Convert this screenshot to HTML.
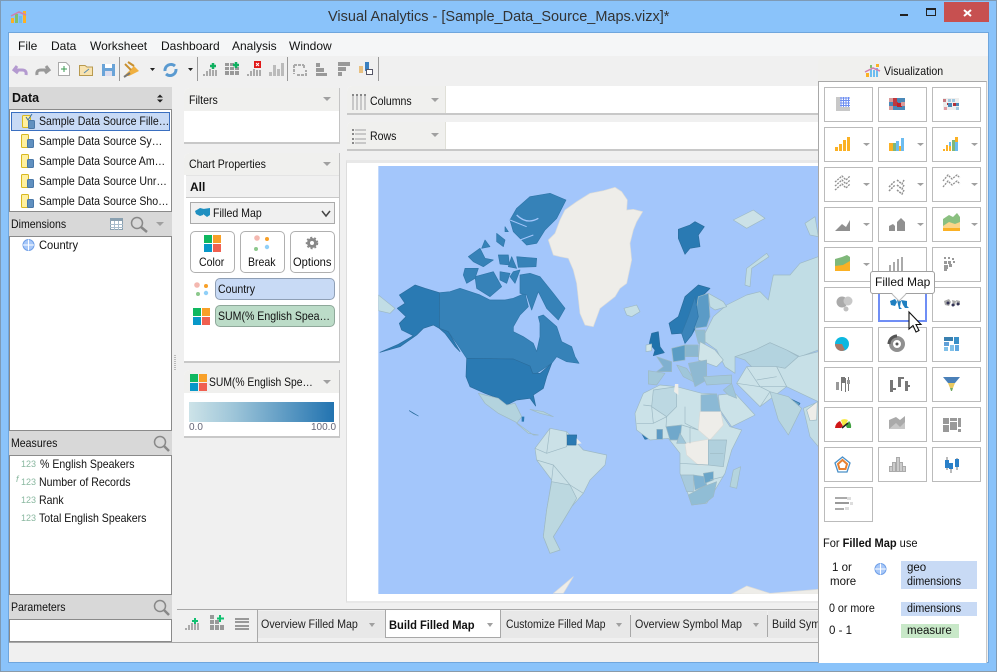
<!DOCTYPE html>
<html><head><meta charset="utf-8"><title>Visual Analytics</title>
<style>
*{box-sizing:border-box}
html,body{margin:0;padding:0;width:997px;height:672px;overflow:hidden;background:#8ac3fa;font-family:"Liberation Sans",sans-serif;font-size:12px;color:#111}
.a{position:absolute}
.t{position:absolute;white-space:nowrap;line-height:16px;height:16px}
.s{transform:scaleX(.88);transform-origin:0 0}
.s9{transform:scaleX(.93);transform-origin:0 0}
.hd{position:absolute;background:#d8d8d8}
.lb{position:absolute;background:#fff;border:1px solid #8a8a8a}
.pn{position:absolute;background:#fff;border-right:1px solid #c4c4c4;border-bottom:2px solid #c8c8c8;border-radius:6px 0 0 0}
.ph{position:absolute;background:#f0f0ee}
.vb{position:absolute;width:49px;height:35px;background:#fff;border:1px solid #bbb}
.btn{position:absolute;top:231px;height:42px;width:45px;background:#fff;border:1px solid #b0b0b0;border-radius:5px}
.tab{position:absolute;top:611px;height:27px;background:#e8e8e8}
</style></head><body>
<div class="a" style="left:0;top:0;width:997px;height:672px;border:1px solid #7e9ab5;border-bottom-color:#8a9aa8"></div>
<div class="a" style="left:944px;top:2px;width:45px;height:20px;background:#c75050"></div>
<div class="t" style="left:328px;top:8px;font-size:14.5px;color:#333;line-height:18px;height:18px">Visual Analytics - [Sample_Data_Source_Maps.vizx]*</div>
<div class="a" style="left:8px;top:32px;width:981px;height:631px;background:#f0f0f0;border:1px solid #6fa6dd"></div>
<div class="a" style="left:9px;top:33px;width:979px;height:23px;background:#f5f6f7"></div>
<div class="t" style="left:18px;top:38px">File</div>
<div class="t" style="left:51px;top:38px">Data</div>
<div class="t" style="left:90px;top:38px">Worksheet</div>
<div class="t" style="left:161px;top:38px">Dashboard</div>
<div class="t" style="left:232px;top:38px">Analysis</div>
<div class="t" style="left:289px;top:38px">Window</div>

<!-- left column -->
<div class="hd" style="left:9px;top:87px;width:163px;height:23px"></div>
<div class="t" style="left:12px;top:90px;font-weight:bold;font-size:12.5px">Data</div>
<div class="lb" style="left:9px;top:109px;width:163px;height:103px"></div>
<div class="a" style="left:11px;top:112px;width:159px;height:19px;background:#c8daf5;border:1px solid #3a6fc0"></div>
<div class="t s" style="left:39px;top:113px">Sample Data Source Fille…</div>
<div class="t s" style="left:39px;top:133px">Sample Data Source Sy…</div>
<div class="t s" style="left:39px;top:153px">Sample Data Source Am…</div>
<div class="t s" style="left:39px;top:173px">Sample Data Source Unr…</div>
<div class="t s" style="left:39px;top:193px">Sample Data Source Sho…</div>
<div class="hd" style="left:9px;top:212px;width:163px;height:24px"></div>
<div class="t s" style="left:11px;top:216px">Dimensions</div>
<div class="lb" style="left:9px;top:236px;width:163px;height:195px"></div>
<div class="t s9" style="left:39px;top:237px">Country</div>
<div class="hd" style="left:9px;top:431px;width:163px;height:24px"></div>
<div class="t s" style="left:11px;top:435px">Measures</div>
<div class="lb" style="left:9px;top:455px;width:163px;height:140px"></div>
<div class="t s" style="left:40px;top:456px">% English Speakers</div>
<div class="t s" style="left:39px;top:474px">Number of Records</div>
<div class="t s" style="left:39px;top:492px">Rank</div>
<div class="t s" style="left:39px;top:510px">Total English Speakers</div>
<div class="t" style="left:21px;top:456px;font-size:9px;color:#8ab8a0">123</div>
<div class="t" style="left:21px;top:474px;font-size:9px;color:#8ab8a0">123</div>
<div class="t" style="left:21px;top:492px;font-size:9px;color:#8ab8a0">123</div>
<div class="t" style="left:21px;top:510px;font-size:9px;color:#8ab8a0">123</div>
<div class="t" style="left:16px;top:471px;font-size:9px;color:#8ab8a0;font-style:italic">f</div>
<div class="hd" style="left:9px;top:595px;width:163px;height:24px"></div>
<div class="t s" style="left:11px;top:599px">Parameters</div>
<div class="lb" style="left:9px;top:619px;width:163px;height:23px"></div>

<!-- middle panels -->
<div class="pn" style="left:184px;top:88px;width:156px;height:56px"></div>
<div class="ph" style="left:184px;top:88px;width:155px;height:23px;border-radius:6px 0 0 0"></div>
<div class="t s" style="left:189px;top:92px">Filters</div>
<div class="pn" style="left:184px;top:153px;width:156px;height:210px"></div>
<div class="ph" style="left:184px;top:153px;width:155px;height:22px;border-radius:6px 0 0 0"></div>
<div class="t s" style="left:189px;top:156px">Chart Properties</div>
<div class="a" style="left:186px;top:175px;width:153px;height:23px;background:#f0f0f0;border-bottom:1px solid #c8c8c8;border-top:1px solid #e4e4e4"></div>
<div class="t" style="left:190px;top:179px;font-weight:bold">All</div>
<div class="a" style="left:190px;top:202px;width:145px;height:22px;background:#f0f0f0;border:1px solid #aaa"></div>
<div class="t s" style="left:213px;top:205px">Filled Map</div>
<div class="btn" style="left:190px"></div><div class="btn" style="left:240px"></div><div class="btn" style="left:290px"></div>
<div class="t s" style="left:199px;top:254px">Color</div>
<div class="t s" style="left:248px;top:254px">Break</div>
<div class="t s9" style="left:293px;top:254px">Options</div>
<div class="a" style="left:215px;top:278px;width:120px;height:22px;background:#c8daf5;border:1px solid #8f9fb5;border-radius:5px"></div>
<div class="t s" style="left:218px;top:281px">Country</div>
<div class="a" style="left:215px;top:305px;width:120px;height:22px;background:#bcdcc8;border:1px solid #8fa89a;border-radius:5px"></div>
<div class="t s" style="left:218px;top:308px">SUM(% English Spea…</div>
<div class="pn" style="left:184px;top:370px;width:156px;height:68px"></div>
<div class="ph" style="left:184px;top:370px;width:155px;height:23px;border-radius:6px 0 0 0"></div>
<div class="t" style="left:209px;top:374px;transform:scaleX(.86);transform-origin:0 0">SUM(% English Spe…</div>
<div class="a" style="left:189px;top:402px;width:145px;height:20px;background:linear-gradient(90deg,#cde3e8,#9fc6d9 30%,#2273b0)"></div>
<div class="t" style="left:189px;top:420px;font-size:10px;color:#667">0.0</div>
<div class="t" style="left:311px;top:420px;font-size:10px;color:#667">100.0</div>

<!-- shelves -->
<div class="a" style="left:347px;top:86px;width:471px;height:29px;background:#fff;border-bottom:2px solid #c8c8c8;border-radius:5px 0 0 0"></div>
<div class="a" style="left:347px;top:86px;width:99px;height:27px;background:#f0f0ee;border-right:1px solid #e0e0d8;border-radius:5px 0 0 0"></div>
<div class="t s" style="left:370px;top:93px">Columns</div>
<div class="a" style="left:347px;top:122px;width:471px;height:29px;background:#fff;border-bottom:2px solid #c8c8c8;border-radius:5px 0 0 0"></div>
<div class="a" style="left:347px;top:122px;width:99px;height:27px;background:#f0f0ee;border-right:1px solid #e0e0d8;border-radius:5px 0 0 0"></div>
<div class="t s" style="left:370px;top:128px">Rows</div>

<!-- chart -->
<div class="a" style="left:346px;top:160px;width:472px;height:443px;background:#fff;border-left:1px solid #ddd;border-top:3px solid #e8e8e8;border-bottom:2px solid #e8e8e8"></div>
<svg class="a" style="left:370px;top:160px" width="448" height="440" viewBox="0 0 1344 1320">
<defs><clipPath id="mc"><rect x="25" y="18" width="1319" height="1284"/></clipPath></defs>
<rect x="25" y="18" width="1319" height="1284" fill="#a3c6fb"/>
<g clip-path="url(#mc)" stroke="#9db9c4" stroke-width="2" stroke-linejoin="round">
<g fill="#eeede9" stroke="#dcdcd8">
<path d="M660,100 L700,92 L735,82 L755,95 L772,120 L770,150 L790,148 L818,155 L800,185 L790,210 L780,250 L785,300 L770,370 L750,385 L735,410 L690,445 L670,500 L645,495 L630,460 L620,370 L610,330 L595,295 L570,290 L550,285 L535,240 L555,220 L570,180 L585,150 L620,125Z"/>
<path d="M550,1300 L610,1250 L580,1300Z"/><path d="M1085,1302 L1130,1278 L1200,1300 L1345,1288 L1345,1305Z"/>
</g>
<g fill="#3682b8" stroke="#2f76a8">
<path d="M208,398 L240,395 L270,385 L330,405 L360,420 L405,420 L430,415 L465,400 L475,440 L450,465 L430,500 L430,515 L460,530 L490,550 L500,575 L510,530 L510,490 L505,470 L520,465 L560,500 L575,545 L605,560 L615,590 L627,610 L590,605 L560,590 L545,610 L500,640 L488,640 L480,618 L430,597 L290,595 L270,565 L235,515 L208,505Z"/>
<path d="M450,345 L480,340 L510,350 L550,400 L585,445 L565,480 L530,445 L505,395 L485,450 L470,405 L450,400Z"/>
<path d="M315,350 L370,335 L395,380 L360,410 L320,385Z"/>
<path d="M285,325 L325,325 L315,355 L290,370 L280,345Z"/>
<path d="M480,110 L540,100 L588,120 L560,175 L525,210 L500,250 L470,255 L430,215 L420,180 L440,145Z"/>
<path d="M440,290 L500,295 L498,320 L445,322Z"/>
<path d="M295,290 L330,265 L345,295 L370,300 L340,320 L310,305Z"/>
<path d="M380,220 L405,240 L400,260 L380,245Z"/><path d="M345,240 L360,260 L335,265Z"/>
<path d="M385,285 L415,285 L418,315 L390,312Z"/><path d="M430,335 L450,330 L435,370 L420,350Z"/>
<path d="M390,335 L420,340 L410,370 L390,360Z"/><path d="M425,290 L440,325 L415,320Z"/>
<path d="M405,200 L415,215 L405,215Z"/>
</g>
<path d="M440,165 Q470,195 505,175" fill="none" stroke="#a3c6fb" stroke-width="4"/>
<path d="M470,290 L500,270 M420,180 L470,200 M450,240 L490,225" fill="none" stroke="#a3c6fb" stroke-width="3"/>
<g fill="#2a7ab3" stroke="#2a6c9c">
<path d="M88,405 L135,375 L165,385 L208,398 L208,505 L190,495 L160,505 L140,525 L90,560 L30,577 L85,553 L130,527 L95,510 L88,490 L108,470 L82,445 L105,430Z"/>
<path d="M208,505 L235,515 L270,575 L255,560 L225,520Z"/>
<path d="M290,595 L430,597 L480,618 L488,640 L510,640 L545,610 L530,650 L520,685 L490,705 L497,738 L480,715 L440,720 L410,735 L385,715 L345,700 L300,680 L288,650Z"/>
<path d="M118,752 L145,768 L130,760Z"/>
<path d="M925,208 L960,195 L975,185 L1003,200 L985,225 L990,260 L960,265 L945,283 L925,235Z"/>
<path d="M812,815 L840,835 L825,838Z"/>
<path d="M1020,385 L985,375 L945,410 L925,470 L897,490 L905,522 L935,520 L945,550 L965,525 L990,480 L985,420Z"/>
<path d="M845,520 L865,515 L870,560 L883,578 L850,587 L855,570 L838,550Z" fill="#1f72ab"/>
<path d="M1252,712 L1290,730 L1285,738 L1255,722Z" fill="#5a9cc4"/>
</g>
<g fill="#c1dde5">
<path d="M1345,290 L1290,310 L1260,345 L1210,345 L1195,420 L1170,395 L1130,405 L1070,435 L1030,470 L1005,520 L1005,545 L1040,570 L1065,620 L1095,640 L1095,590 L1155,570 L1200,548 L1250,570 L1290,590 L1345,570Z"/>
<path d="M1015,400 L1060,425 L1070,440 L1035,450 L1020,440Z"/>
<path d="M1125,375 L1130,325 L1190,280 L1197,290 L1145,325 L1140,380Z"/>
<path d="M1090,180 L1150,150 L1185,175 L1130,205Z" fill="#cbe1e7"/>
<path d="M1305,190 L1335,170 L1345,230 L1320,225Z"/>
<path d="M25,405 L75,445 L60,460 L25,452Z"/>
<path d="M762,445 L800,435 L810,455 L785,470 L770,465Z" fill="#c6dfe5"/>
</g>
<path d="M985,410 L1015,400 L1020,470 L1010,500 L975,505 L975,470Z" fill="#5b9bc6"/>
<path d="M945,550 L965,525 L985,470 L975,410 L955,470 L935,520Z" fill="#3a84ba" stroke="#2f76a8"/>
<g>
<path d="M975,510 L1005,510 L1005,555 L985,550Z" fill="#90bcd2"/>
<path d="M990,545 L1035,570 L1060,600 L1040,620 L985,600Z" fill="#cfe4e8"/>
<path d="M945,555 L985,555 L985,590 L945,590Z" fill="#8bb7cf"/>
<path d="M905,565 L945,555 L945,600 L910,605Z" fill="#5a9cc4"/>
<path d="M860,590 L905,605 L905,635 L860,635 L880,620Z" fill="#80b0cf"/>
<path d="M835,632 L885,640 L860,675 L835,672Z" fill="#a3c8da"/>
<path d="M920,615 L950,625 L980,670 L940,650Z" fill="#9fc6da"/>
<path d="M955,610 L1010,600 L1010,660 L975,680Z" fill="#8eb9d2"/>
<path d="M1000,650 L1085,645 L1085,670 L1010,675Z" fill="#a4c9da"/>
<path d="M828,555 L845,552 L845,572 L828,575Z" fill="#cfe4e8"/>
<path d="M1095,590 L1155,570 L1200,548 L1250,570 L1285,590 L1245,625 L1220,620 L1150,625 L1125,600Z" fill="#b3d3df"/>
<path d="M1285,590 L1345,575 L1345,725 L1250,680 L1220,620 L1245,625Z" fill="#c7e0e7"/>
<path d="M1130,620 L1220,620 L1250,680 L1170,740 L1100,670Z" fill="#cbe2e8"/>
<path d="M1045,705 L1095,700 L1155,765 L1085,800 L1050,750Z" fill="#cbe2e8"/>
<path d="M1060,690 L1085,670 L1100,715 L1075,705Z" fill="#9fc6da"/>
<path d="M1200,695 L1255,710 L1295,745 L1255,825 L1225,780Z" fill="#b8d6e0"/>
<path d="M1345,725 L1345,860 L1320,830 L1300,745Z" fill="#c3dde5"/>
<path d="M1310,750 L1342,725 L1340,780 L1320,782Z" fill="#eeede9"/>
<path d="M820,700 L870,675 L920,680 L995,700 L1040,702 L1050,755 L1080,800 L1115,810 L1085,870 L1065,940 L1035,990 L1010,1030 L965,1035 L950,990 L930,940 L930,880 L895,835 L840,840 L800,810 L795,760Z" fill="#cbe2e8"/>
<path d="M850,690 L920,680 L920,740 L890,770 L845,740Z" fill="#bcd8e2"/>
<path d="M915,672 L925,672 L925,705 L912,695Z" fill="#eeede9" stroke="none"/>
<path d="M993,705 L1040,702 L1052,755 L993,755Z" fill="#8bb9d5"/>
<path d="M990,755 L1052,755 L1060,795 L1020,840 L985,810Z" fill="#eeede9" stroke="#dcdcd8"/>
<path d="M945,850 L1015,838 L1015,915 L985,915 L950,885Z" fill="#eeede9" stroke="#dcdcd8"/>
<path d="M888,800 L935,795 L930,840 L900,840Z" fill="#70a8cb"/>
<path d="M860,808 L878,808 L878,838 L860,838Z" fill="#5c9ac4"/>
<path d="M930,820 L948,850 L920,850Z" fill="#9fc6da"/>
<path d="M1015,840 L1070,840 L1060,920 L1015,915Z" fill="#b0d0dd"/>
<path d="M932,945 L970,945 L970,995 L950,995Z" fill="#a8cadc"/>
<path d="M970,945 L1005,950 L1010,975 L975,990Z" fill="#80b3d2"/>
<path d="M1000,940 L1030,935 L1030,960 L1005,970Z" fill="#6aa5c8"/>
<path d="M955,1005 L1000,980 L1040,965 L1030,1010 L1005,1030 L965,1035Z" fill="#90bdd5"/>
<path d="M1090,930 L1112,920 L1100,985 L1080,980Z" fill="#b4d4de"/>
<path d="M325,700 L345,705 L385,715 L410,735 L435,730 L455,770 L440,790 L475,820 L505,825 L490,825 L435,785 L385,760 L345,730Z" fill="#b3d3de"/>
<path d="M480,748 L520,755 L550,770 L510,760Z" fill="#b3d3de"/>
<path d="M495,865 L540,805 L590,815 L640,870 L710,885 L705,915 L660,960 L640,1000 L605,1040 L575,1090 L550,1130 L570,1170 L540,1180 L520,1130 L530,1050 L545,960 L500,900Z" fill="#cbe1e7"/>
<path d="M545,965 L600,975 L620,1015 L605,1040 L575,1090 L550,1130 L570,1170 L540,1180 L520,1130 L530,1050Z" fill="#bcd8e0"/>
<path d="M590,825 L620,825 L618,855 L592,855Z" fill="#2a7ab3" stroke="#2a6c9c"/>
<path d="M620,835 L635,850 L620,852Z" fill="#eeede9" stroke="none"/>
<path d="M455,770 L463,770 L462,785 L455,785Z" fill="#2a7ab3" stroke="none"/>
<path fill="none" d="M800,790 L850,790 L890,770 M845,740 L850,790 M945,740 L945,790 L985,810 M820,735 L845,738 M890,770 L888,800 M935,795 L985,810 M960,850 L960,800 M1060,880 L1020,880 M930,910 L1015,915 M1020,960 L1060,950 M540,805 L530,880 L495,865 M590,815 L590,860 L530,880 M545,960 L550,915 L500,900 M550,915 L600,975 M600,975 L640,1000 M1130,620 L1170,680 L1250,680 M1100,670 L1170,680 L1200,695 M1160,660 L1220,650 M1170,740 L1200,695"/>
</g>
</g>
</svg>

<!-- tabs -->
<div class="a" style="left:177px;top:609px;width:641px;height:1px;background:#a8a8a8"></div>
<div class="a" style="left:9px;top:642px;width:809px;height:1px;background:#a8a8a8"></div>
<div class="a" style="left:257px;top:610px;width:1px;height:32px;background:#a8a8a8"></div>
<div class="tab" style="left:258px;width:127px"></div>
<div class="tab" style="left:501px;width:129px"></div>
<div class="tab" style="left:631px;width:136px"></div>
<div class="tab" style="left:768px;width:50px"></div>
<div class="a" style="left:385px;top:610px;width:116px;height:28px;background:#fff;border:1px solid #a8a8a8;border-top:none;border-bottom:1px solid #a8a8a8"></div>
<div class="a" style="left:630px;top:615px;width:1px;height:22px;background:#a8a8a8"></div>
<div class="a" style="left:767px;top:615px;width:1px;height:22px;background:#a8a8a8"></div>
<div class="t s9" style="left:261px;top:617px;font-size:11.5px;color:#222">Overview Filled Map</div>
<div class="t s9" style="left:389px;top:617px;font-weight:bold">Build Filled Map</div>
<div class="t" style="left:506px;top:617px;font-size:11.5px;color:#222;transform:scaleX(.9);transform-origin:0 0">Customize Filled Map</div>
<div class="t s9" style="left:635px;top:617px;font-size:11.5px;color:#222">Overview Symbol Map</div>
<div class="a" style="left:772px;top:617px;width:46px;height:16px;overflow:hidden"><div class="t s9" style="left:0;top:0;font-size:11.5px;color:#222">Build Symbol Map</div></div>

<!-- visualization panel -->
<div class="a" style="left:818px;top:57px;width:169px;height:25px;background:#f0f0ee;border-radius:6px 0 0 0"></div>
<div class="t s" style="left:884px;top:63px">Visualization</div>
<div class="a" style="left:818px;top:81px;width:169px;height:582px;background:#fff;border:1px solid #a8a8a8;border-right:1px solid #c8c8c8;border-bottom:none"></div>
<div class="vb" style="left:824px;top:87px"></div><div class="vb" style="left:878px;top:87px"></div><div class="vb" style="left:932px;top:87px"></div>
<div class="vb" style="left:824px;top:127px"></div><div class="vb" style="left:878px;top:127px"></div><div class="vb" style="left:932px;top:127px"></div>
<div class="vb" style="left:824px;top:167px"></div><div class="vb" style="left:878px;top:167px"></div><div class="vb" style="left:932px;top:167px"></div>
<div class="vb" style="left:824px;top:207px"></div><div class="vb" style="left:878px;top:207px"></div><div class="vb" style="left:932px;top:207px"></div>
<div class="vb" style="left:824px;top:247px"></div><div class="vb" style="left:878px;top:247px"></div><div class="vb" style="left:932px;top:247px"></div>
<div class="vb" style="left:824px;top:287px"></div><div class="vb" style="left:878px;top:287px;border:2px solid #6f8ef5"></div><div class="vb" style="left:932px;top:287px"></div>
<div class="vb" style="left:824px;top:327px"></div><div class="vb" style="left:878px;top:327px"></div><div class="vb" style="left:932px;top:327px"></div>
<div class="vb" style="left:824px;top:367px"></div><div class="vb" style="left:878px;top:367px"></div><div class="vb" style="left:932px;top:367px"></div>
<div class="vb" style="left:824px;top:407px"></div><div class="vb" style="left:878px;top:407px"></div><div class="vb" style="left:932px;top:407px"></div>
<div class="vb" style="left:824px;top:447px"></div><div class="vb" style="left:878px;top:447px"></div><div class="vb" style="left:932px;top:447px"></div>
<div class="vb" style="left:824px;top:487px"></div>
<div class="t" style="left:823px;top:536px;font-size:11.5px;transform:scaleX(.96);transform-origin:0 0">For <b>Filled Map</b> use</div>
<div class="t" style="left:832px;top:560px;font-size:11.5px">1 or</div>
<div class="t" style="left:830px;top:574px;font-size:11.5px">more</div>
<div class="a" style="left:901px;top:561px;width:76px;height:28px;background:#c8daf5"></div>
<div class="t" style="left:907px;top:560px;font-size:11.5px">geo</div>
<div class="t s9" style="left:907px;top:574px;font-size:11.5px">dimensions</div>
<div class="t s9" style="left:829px;top:601px;font-size:11.5px">0 or more</div>
<div class="a" style="left:901px;top:602px;width:76px;height:14px;background:#c8daf5"></div>
<div class="t s9" style="left:907px;top:601px;font-size:11.5px">dimensions</div>
<div class="t" style="left:829px;top:623px;font-size:11.5px">0 - 1</div>
<div class="a" style="left:901px;top:624px;width:58px;height:14px;background:#c8e8c8"></div>
<div class="t" style="left:907px;top:623px;font-size:11.5px">measure</div>

<!-- all icons, page coordinates -->
<svg class="a" style="left:0;top:0" width="997" height="672" viewBox="0 0 997 672">
<!-- window controls -->
<rect x="900" y="14" width="8" height="2" fill="#222"/>
<rect x="926.500" y="8.500" width="9" height="7" fill="none" stroke="#222"/><rect x="926" y="8" width="10" height="2" fill="#222"/>
<path d="M964,10 L971,16 M971,10 L964,16" stroke="#fff" stroke-width="2"/>
<!-- app logo -->
<g><rect x="11" y="18" width="3" height="5" fill="#fbb124"/><rect x="15" y="14" width="3" height="9" fill="#7fc06e"/><rect x="19" y="16" width="3" height="7" fill="#6cbcf0"/><rect x="23" y="11" width="3" height="12" fill="#fbb124"/><path d="M11,16 L19,12 L26,15" stroke="#d080b0" stroke-width="1.500" fill="none"/></g>
<!-- toolbar -->
<path d="M17,66 L14,70 L18,73 M14,70 L22,70 Q27,70 26,75" fill="none" stroke="#b49ad0" stroke-width="3"/>
<path d="M46,66 L49,70 L45,73 M49,70 L41,70 Q36,70 37,75" fill="none" stroke="#999" stroke-width="3"/>
<path d="M58.500,62.500 H66 L69.500,66 V75.500 H58.500Z" fill="#fff" stroke="#aaa"/><path d="M64,66 V72 M61,69 H67" stroke="#3a9a50"/>
<path d="M79.500,65.500 H85 L87,67 H92.500 V75.500 H79.500Z" fill="#f8e3b0" stroke="#b89a50"/><path d="M84,73 L89,69" stroke="#5a8ab0"/>
<rect x="102" y="64" width="13" height="12" fill="#6aa4d8"/><rect x="105" y="64" width="7" height="4" fill="#fff"/><rect x="105" y="71" width="7" height="5" fill="#dde"/>
<rect x="119" y="57" width="1" height="24" fill="#999"/>
<path d="M124,76 L134,66 L139,71 L129,76Z" fill="#f0b040"/><path d="M125,64 L131,70 M128,62 L134,66" stroke="#c89030" stroke-width="2"/><path d="M124,77 L130,73" stroke="#777" stroke-width="2"/>
<path d="M150,68 H155 L152.500,71Z" fill="#222"/><path d="M188,68 H193 L190.500,71Z" fill="#222"/>
<path d="M175,66 A6,6 0 0 0 165,71 M166,74 A6,6 0 0 0 176,69" fill="none" stroke="#5a9ad0" stroke-width="3"/>
<rect x="197" y="57" width="1" height="24" fill="#999"/>
<g fill="#aaa"><rect x="203" y="74" width="2" height="2"/><rect x="206" y="71" width="2" height="5"/><rect x="209" y="69" width="2" height="7"/><rect x="212" y="70" width="2" height="6"/><rect x="215" y="70" width="2" height="6"/></g>
<path d="M213,63 V69 M210,66 H216" stroke="#10b060" stroke-width="2.500"/>
<g fill="#999"><rect x="225" y="63" width="4" height="3"/><rect x="230" y="63" width="4" height="3"/><rect x="225" y="67" width="4" height="3"/><rect x="230" y="67" width="4" height="3"/><rect x="235" y="67" width="4" height="3"/><rect x="225" y="71" width="4" height="4"/><rect x="230" y="71" width="4" height="4"/><rect x="235" y="71" width="4" height="4"/></g>
<path d="M236,62 V68 M233,65 H239" stroke="#10b060" stroke-width="2.500"/>
<g fill="#aaa"><rect x="247" y="74" width="2" height="2"/><rect x="250" y="71" width="2" height="5"/><rect x="253" y="69" width="2" height="7"/><rect x="256" y="70" width="2" height="6"/><rect x="259" y="70" width="2" height="6"/></g>
<rect x="254" y="61" width="7" height="7" fill="#e01818"/><path d="M256,63 L259,66 M259,63 L256,66" stroke="#fff"/>
<g fill="#bbb"><rect x="269" y="72" width="3" height="4"/><rect x="273" y="65" width="3" height="11"/><rect x="277" y="69" width="3" height="7"/><rect x="281" y="63" width="3" height="13"/></g>
<rect x="287" y="57" width="1" height="24" fill="#999"/>
<path d="M294,65 H304 M294,65 V74 M304,65 V68 M297,75 H306 V70" fill="none" stroke="#aaa" stroke-width="2" stroke-dasharray="3 1"/>
<g fill="#999"><rect x="316" y="63" width="4" height="4"/><rect x="316" y="68" width="8" height="4"/><rect x="316" y="73" width="11" height="3"/></g>
<g fill="#999"><rect x="338" y="62" width="12" height="4"/><rect x="338" y="67" width="8" height="4"/><rect x="338" y="72" width="4" height="4"/></g>
<rect x="359" y="66" width="4" height="7" fill="#e8c080"/><rect x="365" y="62" width="4" height="9" fill="#3a80c0"/><rect x="366.500" y="69.500" width="6" height="5" fill="#fff" stroke="#556"/>
<rect x="378" y="57" width="1" height="24" fill="#999"/>
<!-- data header arrows -->
<path d="M160,94.500 L163,97.500 H157Z M157,99.500 H163 L160,102.500Z" fill="#222"/>
<!-- data source icons -->
<g fill="#fff0a0" stroke="#d8b820"><rect x="22.500" y="115.500" width="8" height="12" rx="1"/><rect x="21.500" y="134.500" width="7" height="13" rx="1"/><rect x="21.500" y="154.500" width="7" height="13" rx="1"/><rect x="21.500" y="174.500" width="7" height="13" rx="1"/><rect x="21.500" y="194.500" width="7" height="13" rx="1"/></g>
<g fill="#6090c0" stroke="#4a78a8"><rect x="28.500" y="120.500" width="6" height="8" rx="1"/><rect x="27.500" y="139.500" width="6" height="8" rx="1"/><rect x="27.500" y="159.500" width="6" height="8" rx="1"/><rect x="27.500" y="179.500" width="6" height="8" rx="1"/><rect x="27.500" y="199.500" width="6" height="8" rx="1"/></g>
<path d="M26,117 L28,120 L32,114" stroke="#3a70a8" fill="none"/>
<!-- dim header -->
<rect x="110.500" y="218.500" width="12" height="11" fill="#fff" stroke="#8aa0b0"/><rect x="110" y="218" width="13" height="3" fill="#8aa0b0"/><path d="M114.500,221 V230 M118.500,221 V230 M110,224.500 H123 M110,227.500 H123" stroke="#a8bccc"/>
<g fill="none" stroke="#888" stroke-width="1.500"><circle cx="137" cy="223" r="5.500"/><path d="M141,227 L147,232" stroke-width="2.500"/><circle cx="160" cy="442" r="5.500"/><path d="M164,446 L169,451" stroke-width="2.500"/><circle cx="160" cy="606" r="5.500"/><path d="M164,610 L169,615" stroke-width="2.500"/></g>
<!-- globe -->
<g fill="#a8c8f8" stroke="#6f9fe8"><circle cx="28.500" cy="245" r="5.500"/><circle cx="880.500" cy="569" r="5.500"/></g>
<path d="M23,245 H34 M28.500,239.500 V250.500 M875,569 H886 M880.500,563.500 V574.500" stroke="#fff"/>
<!-- panel arrows -->
<g fill="#a0a0a0"><path d="M323,97 H331 L327,101Z"/><path d="M323,162 H331 L327,166Z"/><path d="M323,380 H331 L327,384Z"/><path d="M431,98 H439 L435,102Z"/><path d="M431,133 H439 L435,137Z"/><path d="M156,222 H164 L160,226Z"/>
<path d="M369,623 H375 L372,627Z"/><path d="M487,623 H493 L490,627Z"/><path d="M616,623 H622 L619,627Z"/><path d="M753,623 H759 L756,627Z"/>
<path d="M863,143 H870 L866.500,146Z"/><path d="M917,143 H924 L920.500,146Z"/><path d="M971,143 H978 L974.500,146Z"/><path d="M863,183 H870 L866.500,186Z"/><path d="M917,183 H924 L920.500,186Z"/><path d="M971,183 H978 L974.500,186Z"/><path d="M863,223 H870 L866.500,226Z"/><path d="M917,223 H924 L920.500,226Z"/><path d="M971,223 H978 L974.500,226Z"/><path d="M863,263 H870 L866.500,266Z"/></g>
<!-- shelves icons -->
<g fill="#c8c8c8"><rect x="352" y="95" width="2" height="15"/><rect x="356" y="95" width="2" height="15"/><rect x="360" y="95" width="2" height="15"/><rect x="364" y="95" width="2" height="15"/></g>
<g fill="#888"><rect x="352" y="94" width="2" height="2"/><rect x="356" y="94" width="2" height="2"/><rect x="360" y="94" width="2" height="2"/><rect x="364" y="94" width="2" height="2"/><rect x="352" y="129" width="2" height="2"/><rect x="352" y="133" width="2" height="2"/><rect x="352" y="138" width="2" height="2"/><rect x="352" y="142" width="2" height="2"/></g>
<g fill="#c8c8c8"><rect x="355" y="129" width="11" height="2"/><rect x="355" y="133" width="11" height="2"/><rect x="355" y="138" width="11" height="2"/><rect x="355" y="142" width="11" height="2"/></g>
<!-- chart-properties -->
<g fill="#1f8fc0"><path d="M195,211 l5,-3 4,1 -1,6 -3,1 -4,-2Z"/><path d="M203,209 l7,-1 0,7 -3,2 -4,-3Z"/></g>
<path d="M322,211 L326,216 L330,211" fill="none" stroke="#444" stroke-width="1.500"/>
<rect x="204" y="235" width="8" height="8" fill="#10b860"/><rect x="213" y="235" width="8" height="8" fill="#f8a028"/><rect x="204" y="244" width="8" height="8" fill="#0898c8"/><rect x="213" y="244" width="8" height="8" fill="#f06050"/>
<rect x="193" y="308" width="8" height="8" fill="#10b860"/><rect x="202" y="308" width="8" height="8" fill="#f8a028"/><rect x="193" y="317" width="8" height="8" fill="#0898c8"/><rect x="202" y="317" width="8" height="8" fill="#f06050"/>
<rect x="190" y="374" width="8" height="8" fill="#10b860"/><rect x="199" y="374" width="8" height="8" fill="#f8a028"/><rect x="190" y="383" width="8" height="8" fill="#0898c8"/><rect x="199" y="383" width="8" height="8" fill="#f06050"/>
<circle cx="257" cy="238" r="2.800" fill="#f4b8b0"/><circle cx="267" cy="239" r="2" fill="#f8a028"/><circle cx="256" cy="249" r="2" fill="#8cc88c"/><circle cx="267" cy="247" r="2.200" fill="#90d0f8"/>
<circle cx="197" cy="285" r="2.800" fill="#f4b8b0"/><circle cx="206" cy="286" r="2" fill="#f8a028"/><circle cx="198" cy="294" r="2" fill="#8cc88c"/><circle cx="206" cy="293" r="2.200" fill="#90d0f8"/>
<circle cx="312" cy="243" r="3.500" fill="none" stroke="#888" stroke-width="3"/><circle cx="312" cy="243" r="5.500" fill="none" stroke="#888" stroke-width="1.500" stroke-dasharray="2 2"/>
<!-- splitter -->
<path d="M175,355 V370" stroke="#bbb" stroke-width="2" stroke-dasharray="1 1"/>
<!-- tab bar icons -->
<g fill="#aaa"><rect x="185" y="628" width="2" height="2"/><rect x="188" y="625" width="2" height="5"/><rect x="191" y="623" width="2" height="7"/><rect x="194" y="623" width="2" height="7"/><rect x="197" y="623" width="2" height="7"/></g>
<path d="M195,618 V624 M192,621 H198" stroke="#10c070" stroke-width="2"/>
<g fill="#999"><rect x="210" y="615" width="4" height="4"/><rect x="210" y="620" width="4" height="4"/><rect x="215" y="620" width="4" height="4"/><rect x="210" y="625" width="4" height="5"/><rect x="215" y="625" width="4" height="5"/><rect x="220" y="625" width="4" height="5"/></g>
<path d="M220,615 V622 M217,618.500 H224" stroke="#10c070" stroke-width="2"/>
<g fill="#999"><rect x="235" y="618" width="14" height="2"/><rect x="235" y="621" width="14" height="2"/><rect x="235" y="625" width="14" height="2"/><rect x="235" y="628" width="14" height="2"/></g>
<!-- vis tab logo -->
<g><rect x="866" y="73" width="3" height="4" fill="#fbb124"/><rect x="870" y="69" width="2" height="8" fill="#6cbcf0"/><rect x="873" y="70" width="2" height="7" fill="#6cbcf0"/><rect x="876" y="68" width="2" height="9" fill="#6cbcf0"/><rect x="876" y="64" width="3" height="3" fill="#fbb124"/><rect x="870" y="65" width="2" height="3" fill="#7fc06e"/><path d="M865,72 L873,68 L880,71" stroke="#d080b0" stroke-width="1.500" fill="none"/></g>
<!-- row1 -->
<rect x="836" y="97" width="14" height="14" fill="#c8c8c8"/><rect x="840" y="97" width="10" height="10" fill="#fff"/>
<path d="M840,98 H850 M840,100.500 H850 M840,103 H850 M840,105.500 H850 M841,97 V107 M843.500,97 V107 M846,97 V107 M848.500,97 V107" stroke="#6d8ef0"/>
<rect x="889" y="98" width="16" height="12" fill="#4a88b8"/><rect x="889" y="98" width="5" height="4" fill="#d89a9a"/><rect x="893" y="98" width="4" height="4" fill="#c0393f"/><rect x="893" y="102" width="5" height="4" fill="#c0393f"/><rect x="897" y="103" width="5" height="4" fill="#c0202a"/><rect x="889" y="106" width="4" height="4" fill="#d89a9a"/><rect x="901" y="102" width="4" height="4" fill="#d89a9a"/>
<rect x="943" y="98" width="16" height="12" fill="#eee"/><g fill="#b03038"><rect x="943" y="99" width="3" height="3" fill="#c87a80"/><rect x="947" y="103" width="2" height="2"/><rect x="953" y="103" width="3" height="3"/><rect x="944" y="107" width="3" height="3" fill="#e09aa0"/></g><g fill="#4a88b8"><rect x="948" y="99" width="3" height="3" fill="#a0c8e0"/><rect x="952" y="99" width="3" height="3" fill="#a0c8e0"/><rect x="948" y="103" width="4" height="4"/><rect x="956" y="103" width="3" height="3"/><rect x="956" y="107" width="3" height="3" fill="#a0c8e0"/></g>
<!-- row2 -->
<g fill="#fbb124"><rect x="835" y="147" width="3" height="4"/><rect x="839" y="144" width="3" height="7"/><rect x="843" y="140" width="3" height="11"/><rect x="847" y="137" width="3" height="14"/></g>
<rect x="889" y="143" width="4" height="8" fill="#fbb124"/><rect x="893" y="143" width="3" height="8" fill="#7fb87a"/><rect x="896" y="141" width="3" height="10" fill="#6cbcf0"/><rect x="899" y="146" width="2" height="5" fill="#fbb124"/><rect x="901" y="138" width="3" height="13" fill="#6cbcf0"/>
<rect x="943" y="149" width="2" height="2" fill="#fbb124"/><rect x="946" y="145" width="2" height="6" fill="#fbb124"/><rect x="949" y="142" width="2" height="9" fill="#6cbcf0"/><rect x="949" y="146" width="2" height="5" fill="#fbb124"/><rect x="952" y="140" width="3" height="11" fill="#7fb87a"/><rect x="955" y="137" width="3" height="14" fill="#6cbcf0"/><rect x="955" y="137" width="3" height="5" fill="#fbb124"/>
<!-- row3 -->
<g fill="none" stroke="#909090" stroke-width="1.300" stroke-dasharray="2 1"><path d="M835,186 L842,180 L846,184 L850,180 M835,190 L842,184 L846,188 L850,184 M835,182 L842,176 L846,180 L850,176"/><path d="M889,187 L895,181 M889,191 L895,185 M897,180 L902,184 L904,180 M897,185 L902,189 L904,185 M897,190 L902,194 L904,190" stroke-width="1.500"/><path d="M943,181 L948,175 L952,179 L957,175 L960,178 M943,187 L948,181 L952,185 L957,181 L960,184"/></g>
<!-- row4 -->
<path d="M835,231 L842,224 L846,227 L850,220 V231Z" fill="#909090"/>
<path d="M889,226 L893,224 L895,226 V231 H889Z M897,231 V222 L901,218 L905,222 V231Z" fill="#909090"/>
<path d="M943,219 L949,215 L953,217 L957,213 L960,217 V231 H943Z" fill="#8ac080"/><path d="M943,226 L949,222 L955,224 L960,222 V231 H943Z" fill="#fbd68a"/><path d="M943,231 V228 H960 V231Z" fill="#fbb124"/>
<!-- row5 -->
<path d="M835,259 L842,257 L847,255 L850,257 V271 H835Z" fill="#7fb87a"/><path d="M835,266 L843,265 L850,261 V271 H835Z" fill="#fbb124"/>
<g fill="#aaa"><rect x="889" y="265" width="2" height="6"/><rect x="893" y="262" width="2" height="9"/><rect x="897" y="259" width="2" height="12"/><rect x="901" y="257" width="2" height="14"/></g>
<g fill="#999"><rect x="944" y="257" width="2" height="2"/><rect x="948" y="257" width="2" height="2"/><rect x="952" y="258" width="2" height="2"/><rect x="944" y="261" width="3" height="3"/><rect x="948" y="261" width="3" height="3"/><rect x="953" y="261" width="2" height="2"/><rect x="944" y="265" width="4" height="4"/><rect x="949" y="264" width="3" height="3"/><rect x="944" y="269" width="3" height="2"/></g>
<!-- row6 -->
<circle cx="842" cy="302" r="5.500" fill="#aaa"/><circle cx="848" cy="301" r="4.500" fill="#c8c8c8"/><circle cx="846" cy="309" r="2.500" fill="#c0c0c0"/>
<g fill="#1f7fc0"><path d="M890,301 l5,-2 2,3 -2,4 -4,-1Z"/><path d="M897,300 l4,1 -1,6 2,2 -3,0Z"/><path d="M901,300 l6,1 0,5 2,2 -4,0 -2,-3Z"/></g>
<g fill="#aaa"><path d="M944,301 l5,-2 2,3 -2,4 -4,-1Z"/><path d="M952,300 l4,1 -1,5 -2,-1Z"/><path d="M956,300 l4,1 0,4 -3,-1Z"/></g><circle cx="948" cy="303" r="1.500" fill="#335"/><circle cx="953" cy="305" r="1.500" fill="#335"/><circle cx="958" cy="304" r="1.500" fill="#335"/>
<!-- row7 -->
<circle cx="842" cy="344" r="7" fill="#0cb8e0"/><path d="M842,344 H835 A7,7 0 0 0 842,351 A7,7 0 0 0 845,350Z" fill="#a87868"/>
<circle cx="897" cy="344" r="6" fill="none" stroke="#909090" stroke-width="4"/><path d="M897,336 A8,8 0 0 0 889,344" stroke="#555" stroke-width="3" fill="none"/><circle cx="897" cy="344" r="1.500" fill="#555"/>
<rect x="944" y="337" width="9" height="4" fill="#3a80b0"/><rect x="954" y="337" width="5" height="7" fill="#3a90c8"/><rect x="944" y="342" width="5" height="4" fill="#60a0d8"/><rect x="950" y="345" width="4" height="6" fill="#80c0e8"/><rect x="955" y="345" width="4" height="6" fill="#60a8e0"/><rect x="944" y="347" width="4" height="4" fill="#80c0e8"/>
<!-- row8 -->
<g fill="#777"><rect x="841" y="377" width="1" height="14"/><rect x="845" y="378" width="1" height="14"/><rect x="848" y="377" width="1" height="14"/><rect x="836" y="382" width="3" height="8" fill="#999"/><rect x="842" y="377" width="3" height="6"/><rect x="847" y="380" width="3" height="4" fill="#999"/></g>
<g fill="#777"><rect x="890" y="380" width="3" height="12"/><rect x="893" y="388" width="3" height="2"/><rect x="898" y="377" width="3" height="10"/><rect x="901" y="377" width="3" height="2"/><rect x="905" y="381" width="3" height="10"/><rect x="908" y="385" width="2" height="2"/></g>
<path d="M943,377 H960 L955,383 H948Z" fill="#4a80b8"/><path d="M948,383 H955 L953,388 H950Z" fill="#e8c860"/><path d="M950,388 H953 L952,391 H951Z" fill="#70a860"/>
<!-- row9 -->
<path d="M835,428 A8,8 0 0 1 840,421 L843,426 L841,428Z" fill="#d01818"/><path d="M841,420 A8,8 0 0 1 848,420 L845,426 H843Z" fill="#f8e840"/><path d="M849,421 A8,8 0 0 1 851,428 H847 L846,426Z" fill="#40a040"/><path d="M842,428 L848,423" stroke="#222" stroke-width="1.500"/>
<path d="M889,429 V420 L896,417 L900,420 L905,416 V429Z" fill="#aaa"/><path d="M889,429 L896,423 L900,427 L905,422 V429Z" fill="#c8c8c8"/>
<g fill="#999"><rect x="943" y="418" width="6" height="6"/><rect x="950" y="418" width="7" height="3"/><rect x="950" y="422" width="7" height="8"/><rect x="943" y="425" width="6" height="7"/><rect x="958" y="418" width="3" height="9"/><rect x="958" y="429" width="3" height="3"/></g>
<!-- row10 -->
<path d="M842.500,457 L850,463 L847,472 H838 L835,463Z" fill="#fff" stroke="#4a90c8" stroke-width="1.300"/><path d="M842.500,460 L847,464 L845.500,469 H839.500 L838,464Z" fill="none" stroke="#e88030" stroke-width="2"/>
<g fill="#ccc" stroke="#aaa"><rect x="889.500" y="466.500" width="3" height="5"/><rect x="892.500" y="462.500" width="3" height="9"/><rect x="896.500" y="457.500" width="3" height="14"/><rect x="899.500" y="462.500" width="3" height="9"/><rect x="902.500" y="466.500" width="3" height="5"/></g>
<g><path d="M947,457 V470 M951,466 V473 M957,458 V470" stroke="#777"/><rect x="945" y="460" width="4" height="8" fill="#2a80c8"/><rect x="949" y="463" width="4" height="6" fill="#2a80c8"/><rect x="955" y="459" width="4" height="8" fill="#2a80c8"/></g>
<!-- row11 -->
<g fill="#aaa"><rect x="835" y="497" width="12" height="2"/><rect x="835" y="502" width="14" height="2" fill="#999"/><rect x="835" y="508" width="9" height="2"/><rect x="847" y="497" width="4" height="3" fill="#ddd"/><rect x="850" y="502" width="3" height="3" fill="#ddd"/><rect x="845" y="507" width="4" height="3" fill="#ddd"/></g>
</svg>

<!-- tooltip -->
<div class="a" style="left:870px;top:271px;width:65px;height:23px;background:#fff;border:1px solid #a0a0a0;border-radius:3px"></div>
<div class="t" style="left:875px;top:274px">Filled Map</div>
<svg class="a" style="left:890px;top:292px" width="20" height="12"><path d="M2,1 L9,9 L16,1Z" fill="#fff"/><path d="M2,2 L9,9 L16,2" fill="none" stroke="#bbb"/></svg>
<svg class="a" style="left:905px;top:310px" width="20" height="26"><path d="M4,2 V19 L8,15.500 L11,22 L14,20.500 L11,14.500 H16Z" fill="#fff" stroke="#111" stroke-width="1.100"/></svg>
</body></html>
